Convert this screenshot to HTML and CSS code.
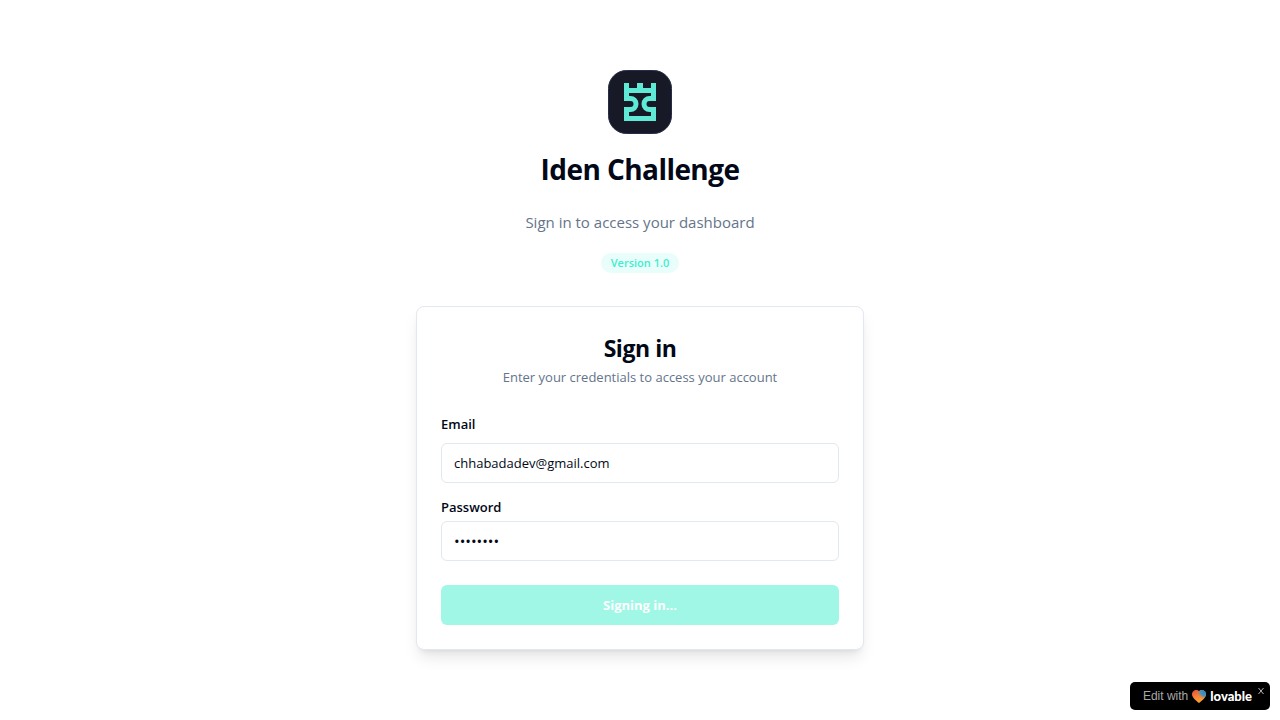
FILE: index.html
```html
<!DOCTYPE html>
<html lang="en">
<head>
<meta charset="utf-8">
<meta name="viewport" content="width=device-width, initial-scale=1">
<title>Iden Challenge</title>
<link rel="stylesheet" href="styles.css">
</head>
<body>
<main class="page">
  <div class="column">
    <header class="intro">
      <svg class="logo" viewBox="0 0 64 64" role="img" aria-label="Iden">
        <rect x="0.5" y="0.5" width="63" height="63" rx="18" fill="#171a26" stroke="#272d49"/>
        <path fill="#5eead4" d="M16 13h5v5h8v-5h6v5h8v-5h5v18h-5v-8H21v8h-5zM16 37h5v9h22v-9h5v14H16z"/>
        <path fill="none" stroke="#5eead4" stroke-width="5" d="M16 28.500h6.500a5.500 5.500 0 0 1 0 11H16M48 28.500h-6.500a5.500 5.500 0 0 0 0 11H48"/>
      </svg>
      <h1 class="heading">Iden Challenge</h1>
      <p class="tagline">Sign in to access your dashboard</p>
      <span class="badge">Version 1.0</span>
    </header>
    <section class="card">
      <div class="card-header">
        <h2 class="card-title">Sign in</h2>
        <p class="card-text">Enter your credentials to access your account</p>
      </div>
      <form class="form">
        <div class="field field-email">
          <label class="label" for="email">Email</label>
          <input class="input" id="email" type="email" value="chhabadadev@gmail.com">
        </div>
        <div class="field">
          <label class="label" for="password">Password</label>
          <input class="input input-password" id="password" type="password" value="password">
        </div>
        <button class="submit" type="submit" disabled>Signing in...</button>
      </form>
    </section>
  </div>
</main>
<aside class="edit-badge">
  <a class="edit-link" href="#">
    <span>Edit with</span>
    <svg class="heart" viewBox="0 0 14 13" aria-hidden="true">
      <defs>
        <linearGradient id="warm" x1="0.2" y1="0" x2="0.5" y2="1">
          <stop offset="0" stop-color="#e8503a"/>
          <stop offset="0.5" stop-color="#f58238"/>
          <stop offset="1" stop-color="#fba826"/>
        </linearGradient>
        <radialGradient id="cool" cx="0.95" cy="0.1" r="0.65">
          <stop offset="0" stop-color="#2386c8"/>
          <stop offset="0.55" stop-color="#4b91ba"/>
          <stop offset="1" stop-color="#f58238" stop-opacity="0"/>
        </radialGradient>
      </defs>
      <path fill="url(#warm)" d="M7 13C4.500 11 0 8 0 4a4 4 0 0 1 7-2.700A4 4 0 0 1 14 4c0 4-4.500 7-7 9z"/>
      <path fill="url(#cool)" d="M7 13C4.500 11 0 8 0 4a4 4 0 0 1 7-2.700A4 4 0 0 1 14 4c0 4-4.500 7-7 9z"/>
    </svg>
    <span class="wordmark">lovable</span>
  </a>
  <button class="close" type="button" aria-label="Close">
    <svg class="close-icon" viewBox="0 0 8 8" aria-hidden="true"><path d="M1.500 1l5 6M6.500 1l-5 6" fill="none" stroke="#b4b4b4"/></svg>
  </button>
</aside>
</body>
</html>
```
FILE: styles.css
```css
* {
  box-sizing: border-box;
  margin: 0;
}

body {
  background: #fff;
  color: #020817;
  font-family: "Segoe UI", "Open Sans", "Noto Sans", sans-serif;
}

.page {
  min-height: 100vh;
  display: flex;
  align-items: center;
  justify-content: center;
  padding: 16px;
}

.column {
  width: 100%;
  max-width: 448px;
}

.intro {
  display: flex;
  flex-direction: column;
  align-items: center;
  margin-bottom: 33px;
  text-align: center;
}

.logo {
  width: 64px;
  height: 64px;
  margin-bottom: 17px;
}

.heading {
  margin-bottom: 23px;
  font-size: 28px;
  line-height: 36px;
  font-weight: 700;
  letter-spacing: -0.02em;
}

.tagline {
  margin-bottom: 19px;
  color: #64748b;
  font-size: 15px;
  line-height: 24px;
}

.badge {
  padding: 0 10px;
  border-radius: 10px;
  background: #e9fefa;
  color: #40edd0;
  font-size: 11px;
  line-height: 20px;
  font-weight: 600;
}

.card {
  border: 1px solid #e2e8f0;
  border-radius: 8px;
  padding: 24px;
  background: #fff;
  box-shadow: 0 10px 15px -3px rgb(0 0 0 / 0.1), 0 4px 6px -4px rgb(0 0 0 / 0.1);
}

.card-header {
  margin-bottom: 27px;
  padding-top: 5px;
  text-align: center;
}

.card-title {
  margin-bottom: 7px;
  font-size: 23px;
  line-height: 24px;
  font-weight: 700;
  letter-spacing: -0.02em;
}

.card-text {
  color: #64748b;
  font-size: 13px;
  line-height: 20px;
}

.field {
  display: flex;
  flex-direction: column;
  gap: 4px;
}

.field-email {
  gap: 9px;
  margin-bottom: 14px;
}

.label {
  font-size: 13px;
  line-height: 20px;
  font-weight: 600;
}

.input {
  width: 100%;
  height: 40px;
  padding: 8px 12px;
  border: 1px solid #e2e8f0;
  border-radius: 6px;
  background: #fff;
  color: #020817;
  font-family: inherit;
  font-size: 13px;
}

.input-password {
  font-size: 15px;
}

.submit {
  width: 100%;
  height: 40px;
  margin-top: 24px;
  border: 0;
  border-radius: 6px;
  background: #a0f7e6;
  color: #fff;
  font-family: inherit;
  font-size: 13px;
  font-weight: 700;
}

.edit-badge {
  position: fixed;
  right: 10px;
  bottom: 10px;
  display: flex;
  height: 28px;
  padding: 0 4px 0 13px;
  border-radius: 5px;
  background: #000;
}

.edit-link {
  display: flex;
  align-items: center;
  gap: 4px;
  color: #a9a9a9;
  font-family: "Liberation Sans", Arial, sans-serif;
  font-size: 12px;
  text-decoration: none;
}

.heart {
  width: 14px;
  height: 13px;
}

.wordmark {
  color: #fff;
  font-family: Lato, sans-serif;
  font-size: 13px;
  font-weight: 900;
}

.close {
  align-self: flex-start;
  display: flex;
  margin: 4px 0 0 4px;
  padding: 1px;
  border: 0;
  background: none;
}

.close-icon {
  width: 8px;
  height: 8px;
}
```
